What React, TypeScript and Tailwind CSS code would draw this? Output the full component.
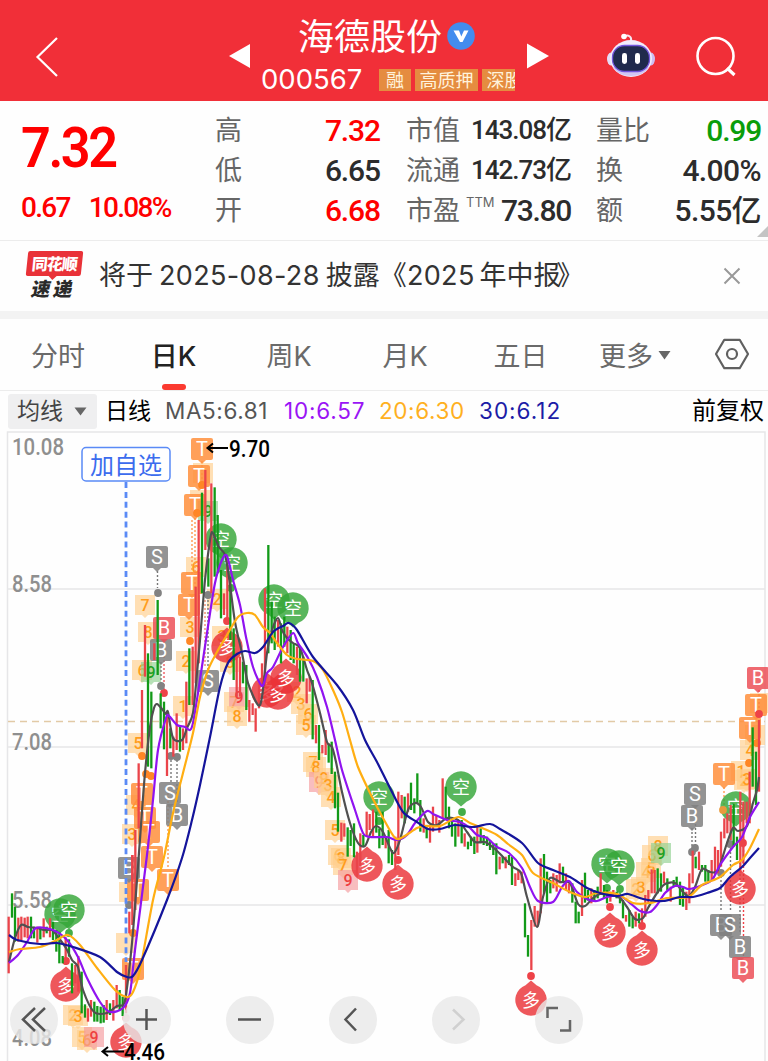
import React from 'react';

const RED = '#ea444a';
const GREEN = '#129a18';

// Each group has its own origin, values are in thirds of a pixel: x, colour, top-bottom
const barGroups = [
  {
    x: 0,
    y: 850,
    bars: '26r200-370 36g130-203 45g170-275 55r203-275 64r200-270 74r203-262 83r200-265 93g200-265 102g230-265 112r230-278 121g232-268 131r205-262 140g230-250 150r205-262 159g215-270 169g240-305 178g245-340 188g318-340 197r262-345 207g268-320 216g340-430 226r345-400 235r318-425 245g365-490 255g463-503 264r475-515 273r450-500 283g455-515 292g468-515 302g470-520 311g465-518 320r450-510 330g460-495 340r450-512 350r405-475 359g420-480 368g440-498 378r345-490 388r185-250 397r15-225',
  },
  {
    x: 0,
    y: 640,
    bars: '397r645-720 406r570-810 416r370-565 426r150-325 435r-45-110 444g40-380 454g155-385 463r10-60 473g-120-105 482g160-265 492g185-328 501r230-408 511g265-325 520r290-350 530r220-330 540g260-335 549r265-330 559r125-310 568g25-195 578r20-195',
  },
  {
    x: 120,
    y: 430,
    bars: '227r470-760 236r270-700 246g188-490 256r120-360 265g385-470 274r160-490 284g172-440 293g255-430 303g420-565 312r490-555 322r390-570 331g440-630 435r475-770 445g345-670 455g515-640 464g560-660 474r570-650 483g580-700 493g560-650 502r590-670 512g600-690',
  },
  {
    x: 120,
    y: 620,
    bars: '341g25-180 350r110-230 360r110-230 369g125-190 379g135-270 388r240-305 398r250-285 407r265-335 417r190-265 426r130-200 521g70-130 531r80-165 540g80-185 550g110-185 560r175-250 569r170-215 578g180-358 588r315-370 597g315-420 607r375-400',
  },
  {
    x: 300,
    y: 740,
    bars: '77r-30-45 86g10-68 95g5-102 105g95-205 114g158-275 124r248-305 133r250-290 143g262-350 152g270-318 162g250-352 171r335-410 181r280-380 190g285-320 200r215-290 209r222-270 219r208-290 229g215-278 238g265-325 248g215-315 257r290-325 266g270-370 276g330-375 286r290-390 295r155-345 305r165-235 314g170-250 324r160-215 333g128-210 343g175-220 352g100-190 361g180-275 371r235-278 380g262-295 390r255-308 399r200-275 409r225-255 418r240-278 428r115-235 437g140-235 447g200-265 456g240-290 466g250-320 475r240-290 485g240-310 494r280-320 504g305-328 513g290-318 523g290-342 532r255-338 542g265-310 551g285-315 561g290-318 570g300-330 580g310-345 589g310-403 599r350-388 608g350-370 617r350-385 627g345-375 636g350-435 646r400-438 655r390-420 665r395-430 675g490-592 684g585-650 694r540-690 704r498-560 713r512-560',
  },
  {
    x: 520,
    y: 740,
    bars: '62r355-520 72g342-460 81g395-488 91g420-460 100r400-445 110r405-455 119r370-430 129g380-425 138r400-450 147r430-460 157g430-488 167g485-550 176g515-550 186r420-528 195g398-488 204g450-482 214r445-490 223g450-480 233g440-475 242r400-465 252g435-475 261g450-490 271r455-485 280r450-470 290g455-475 300g460-490 309g480-535 318r525-545 328g510-560 338g530-565 347r515-560 357g520-550 366r505-550 376r465-530 385r450-490 395r388-460 404r390-460 413g385-460 423g400-455 432r395-430 442g415-450 452r440-485 461g420-440 470g410-440 480g425-495 489g440-500 499r455-510 508r400-490 518r332-430 527g350-385 537r335-390 546g375-395 556g375-425 565g390-425 575r360-420 585r320-405 594r330-400 603r275-380 613r235-295 622r220-280 632r195-300 641g190-320 651g290-360 661r155-400 670r185-370 680r185-250 689r95-250 698g-38-140 708g35-195 717r-60-155',
  },
];

const bars = barGroups.flatMap((g) =>
  g.bars.split(' ').map((s) => {
    const m = s.match(/^(\d+)([rg])(-?\d+)-(\d+)$/)!;
    return { x: g.x + +m[1] / 3, up: m[2] === 'r', y1: g.y + +m[3] / 3, y2: g.y + +m[4] / 3 };
  })
);

const averages = [
  {
    color: '#505050',
    points: '9,962 15,938 21,925 28,927 37,928 44,930 52,930 58,937 66,948 72,960 78,967 83,990 94,1012 107,1013 117,1006 123,1005 126,995 132,943 137,880 141,825 145,773 150,727 154,708 157,704 162,709 166,714 168,712 173,738 182,740 187,728 193,713 197,673 200,640 205,580 210,540 212,532 215,538 219,547 225,555 229,577 235,622 242,653 248,683 258,705 262,697 267,653 272,630 278,618 282,630 287,638 293,643 300,648 307,670 312,683 320,713 327,742 332,747 336,762 342,792 350,823 358,843 365,846 371,832 376,826 383,832 390,848 394,853 400,840 408,810 415,803 421,807 428,822 437,825 447,818 458,820 467,832 475,842 485,842 495,849 503,857 513,867 521,873 527,897 537,927 543,897 550,878 560,882 570,883 578,904 585,906 592,899 600,894 610,895 620,898 627,907 635,919 643,918 648,908 657,893 665,884 675,883 683,892 689,896 695,887 702,869 710,872 718,870 727,843 733,828 738,831 747,826 753,803 757,790 759,777',
  },
  {
    color: '#9013f0',
    points: '9,963 18,955 27,942 36,928 53,930 67,940 78,957 87,978 100,1002 110,1012 123,1008 130,993 135,950 147,855 153,800 158,750 166,718 169,716 177,725 185,727 190,730 193,723 198,693 207,633 215,583 222,560 227,556 233,580 240,605 246,637 253,667 262,686 267,673 273,667 283,647 293,633 298,643 308,658 317,677 327,707 335,740 342,770 355,810 363,833 370,837 387,837 397,840 407,835 415,823 427,811 433,814 447,820 460,822 470,828 477,835 487,838 497,847 509,853 522,868 530,887 538,901 553,902 562,887 569,881 577,892 587,899 597,901 607,897 620,896 630,903 640,911 650,912 657,905 665,893 675,886 683,887 689,889 700,886 712,880 720,865 733,847 742,837 750,817 759,802',
  },
  {
    color: '#ffae12',
    points: '9,952 20,949 40,947 55,941 68,935 80,945 97,968 115,990 127,997 133,992 140,970 153,900 164,857 173,813 183,773 193,733 200,697 208,670 217,652 227,635 238,617 247,613 255,615 263,627 270,633 277,643 287,655 297,659 313,661 323,670 333,690 342,712 350,740 358,767 372,797 383,818 395,838 403,837 417,828 425,826 440,826 458,817 470,823 482,828 497,835 508,844 522,855 533,873 553,883 570,892 585,897 597,893 617,894 633,903 650,903 667,898 688,897 702,885 720,877 733,865 742,860 750,848 759,829',
  },
  {
    color: '#14149b',
    points: '9,935 17,940 40,944 57,943 73,947 100,957 117,972 127,977 133,976 142,960 167,900 182,858 192,820 200,785 210,737 220,687 228,663 237,654 245,651 255,653 263,647 273,632 283,626 289,623 297,630 313,657 337,685 353,710 365,740 377,762 390,788 403,812 417,822 428,829 440,829 455,825 473,827 490,824 500,829 522,843 538,863 553,870 570,877 587,888 600,893 617,896 628,894 643,899 663,901 680,897 693,897 707,893 720,888 730,877 742,867 750,858 759,848',
  },
];

const smoothPath = (points: string) => {
  const p = points.split(' ').map((s) => s.split(',').map(Number));
  let d = `M${p[0][0]} ${p[0][1]}`;
  for (let i = 0; i < p.length - 1; i++) {
    const a = p[i - 1] || p[i];
    const b = p[i];
    const c = p[i + 1];
    const e = p[i + 2] || c;
    d += `C${b[0] + (c[0] - a[0]) / 7} ${b[1] + (c[1] - a[1]) / 7} ${c[0] - (e[0] - b[0]) / 7} ${c[1] - (e[1] - b[1]) / 7} ${c[0]} ${c[1]}`;
  }
  return d;
};

type Mark = [string, number, number];

// Nine-count labels
const counts: Mark[] = [
  ['7', 145, 605], ['8', 148, 632], ['6', 142, 670], ['g9', 151, 672], ['5', 138, 743], ['4', 136, 805], ['3', 132, 834],
  ['2', 186, 661], ['1', 183, 706], ['6', 196, 567], ['3', 190, 627], ['', 200, 500], ['', 203, 473], ['g9', 208, 511], ['2', 217, 599],
  ['3', 222, 636], ['8', 230, 662], ['7', 234, 702], ['r9', 239, 697], ['8', 237, 716], ['', 129, 892], ['', 126, 943],
  ['2', 297, 692], ['3', 301, 704], ['6', 308, 714], ['5', 306, 725], ['7', 313, 762], ['8', 316, 767], ['r9', 319, 782],
  ['9', 324, 778], ['3', 328, 785], ['4', 331, 797], ['5', 335, 830], ['6', 338, 855], ['8', 341, 858], ['7', 343, 865], ['r9', 348, 880],
  ['2', 73, 1015], ['3', 78, 1016], ['5', 82, 1037], ['6', 87, 1040], ['r9', 94, 1037],
  ['2', 636, 889], ['3', 641, 887], ['4', 646, 872], ['5', 651, 868], ['6', 652, 855], ['8', 658, 846], ['g9', 661, 853],
  ['1', 741, 771], ['2', 744, 780], ['3', 747, 779], ['4', 750, 750], ['', 755, 735], ['', 760, 703],
];

const badges: Mark[] = [
  ['T', 133, 969], ['T', 138, 890], ['T', 142, 794], ['T', 145, 818], ['T', 149, 832], ['T', 152, 857], ['T', 168, 880],
  ['T', 189, 605], ['T', 192, 583], ['T', 195, 505], ['T', 199, 476], ['T', 202, 449],
  ['T', 724, 774], ['T', 750, 728], ['T', 756, 705],
  ['S', 157, 557], ['b', 161, 650], ['B', 164, 628], ['S', 170, 793], ['b', 177, 815], ['b', 129, 868], ['S', 208, 681],
  ['b', 692, 816], ['S', 695, 794], ['b', 721, 925], ['S', 730, 925], ['b', 740, 947], ['B', 743, 968], ['B', 758, 678],
];

const bubbles: Mark[] = [
  ['空', 60, 914], ['空', 69, 910], ['空', 221, 539], ['空', 232, 563], ['空', 274, 600], ['空', 293, 608], ['空', 379, 797],
  ['空', 461, 787], ['空', 607, 864], ['空', 619, 866], ['空', 736, 807],
  ['多', 66, 986], ['多', 126, 1042], ['多', 227, 647], ['多', 267, 692], ['多', 278, 694], ['多', 286, 678], ['多', 367, 866],
  ['多', 398, 884], ['多', 531, 1000], ['多', 610, 932], ['多', 642, 950], ['多', 740, 889],
];

const dots: Mark[] = [
  ['#44ad48', 69, 933], ['#44ad48', 462, 812], ['#44ad48', 379, 821], ['#44ad48', 607, 888], ['#44ad48', 620, 889], ['#44ad48', 231, 588],
  ['#ee4248', 66, 961], ['#f7c4c8', 126, 1018], ['#ee4248', 398, 860], ['#ee4248', 531, 976], ['#ee4248', 610, 907],
  ['#ee4248', 642, 926], ['#ee4248', 743, 843], ['#ee4248', 164, 693], ['#ee4248', 227, 621], ['#ee4248', 759, 714],
  ['#828282', 158, 593], ['#828282', 161, 686], ['#828282', 171, 756], ['#828282', 177, 757], ['#828282', 208, 595],
  ['#828282', 695, 848], ['#828282', 692, 852], ['#828282', 721, 873], ['#828282', 730, 844], ['#828282', 129, 905],
  ['#ff8625', 142, 756], ['#ff8625', 146, 774], ['#ff8625', 151, 776], ['#ff8625', 190, 641], ['#ff8625', 202, 485], ['#ff8625', 197, 513],
  ['#ff8625', 749, 763], ['#e89a3c', 723, 810], ['#ff8625', 133, 933], ['#ff8625', 757, 743],
];

const leaders: [string, number, number, number][] = [
  ['#777', 157.5, 571, 588], ['#777', 161, 662, 684], ['#ee5a5e', 164, 640, 692], ['#777', 171, 760, 782], ['#777', 177, 760, 804],
  ['#ff9a50', 168, 785, 868], ['#ff9a50', 195, 518, 590], ['#ff9a50', 192, 520, 590], ['#777', 208, 600, 670], ['#ee8a70', 205, 600, 668],
  ['#777', 692, 828, 850], ['#777', 695.5, 808, 846], ['#777', 721, 876, 912], ['#777', 730.5, 848, 912], ['#777', 740, 862, 934],
  ['#ee4248', 743.5, 846, 956], ['#ff9a50', 724, 787, 808], ['#ff9a50', 202, 461, 482], ['#ee4248', 759, 690, 710],
];

const numFont = 'Roboto, "Noto Sans CJK SC", sans-serif';
const cjkFont = '"Noto Sans CJK SC", sans-serif';

const Count = ({ mark: [label, x, y] }: { mark: Mark }) => {
  const kind = label[0];
  const box = kind === 'g' ? '#8fd08f' : kind === 'r' ? '#f59a9c' : '#ffce8c';
  const ink = kind === 'g' ? '#22a022' : kind === 'r' ? '#ee4040' : '#ff9d1c';
  return (
    <g>
      <path d={`M${x - 10} ${y - 10}h20v20h-7l-3 3l-3-3h-7z`} fill={box} fillOpacity={0.65} />
      {label && (
        <text x={x} y={y + 6} fontSize={16} fontFamily={numFont} fontWeight={500} textAnchor="middle" fill={ink}>
          {label.replace(/[gr]/, '')}
        </text>
      )}
    </g>
  );
};

const Badge = ({ mark: [label, x, y] }: { mark: Mark }) => {
  const fill = label === 'T' ? '#ff8f3c' : label === 'B' ? '#ec5058' : '#808080';
  return (
    <g>
      <rect x={x - 11} y={y - 11} width={22} height={22} rx={2} fill={fill} fillOpacity={0.85} />
      <path d={`M${x - 4} ${y + 11}h8l-4 4z`} fill={fill} fillOpacity={0.85} />
      <text x={x} y={y + 7} fontSize={20} fontFamily={numFont} textAnchor="middle" fill="#fff">
        {label.toUpperCase()}
      </text>
    </g>
  );
};

const Bubble = ({ mark: [label, x, y] }: { mark: Mark }) => {
  const down = label === '空';
  const s = down ? 1 : -1;
  return (
    <g>
      <path
        d={`M${x - 5.5} ${y + 14.7 * s}L${x} ${y + 19.5 * s}L${x + 5.5} ${y + 14.7 * s}A15.7 15.7 0 1 ${down ? 0 : 1} ${x - 5.5} ${y + 14.7 * s}z`}
        fill={down ? '#35a638' : '#ea3237'}
        fillOpacity={0.82}
      />
      <text x={x} y={y + 6.5} fontSize={18} fontFamily={cjkFont} textAnchor="middle" fill="#fff">
        {label}
      </text>
    </g>
  );
};

const Dot = ({ mark: [fill, x, y] }: { mark: Mark }) => <circle cx={x} cy={y} r={3.9} fill={fill} />;

const axis: [string, number, number][] = [
  ['10.08', 455, 52],
  ['8.58', 592, 40],
  ['7.08', 750, 40],
  ['5.58', 908, 40],
  ['4.08', 1046, 40],
];

const Chart = () => (
  <svg viewBox="0 431 768 630" width="768" height="630" className="block">
    <g stroke="#e6e6e8" strokeWidth={1.5}>
      <path d="M7.5 1061V432H765V1061" fill="none" />
      <path d="M8 589H765M8 747H765M8 905H765" />
    </g>
    {axis.map(([t, y, w]) => (
      <text key={t} x={12} y={y} fontSize={23} fontFamily={numFont} fontWeight={500} fill="#8f8f8f" textLength={w} lengthAdjust="spacingAndGlyphs">
        {t}
      </text>
    ))}
    <path d="M8 721.5H765" stroke="#e2caa6" strokeWidth={1.6} strokeDasharray="7 5" />
    {counts.map((m, i) => <Count key={i} mark={m} />)}
    {leaders.map(([c, x, y1, y2], i) => (
      <path key={i} d={`M${x} ${y1}V${y2}`} stroke={c} strokeWidth={1.4} strokeDasharray="2 2" />
    ))}
    {badges.map((m, i) => <Badge key={i} mark={m} />)}
    {bubbles.map((m, i) => <Bubble key={i} mark={m} />)}
    {dots.map((m, i) => <Dot key={i} mark={m} />)}
    <path d="M126 482V962" stroke="#5a8af6" strokeWidth={2.8} strokeDasharray="6 3.9" />
    {bars.map((b, i) => (
      <path key={i} d={`M${b.x} ${b.y1}V${b.y2}`} stroke={b.up ? RED : GREEN} strokeWidth={2.3} />
    ))}
    {averages.map((a) => (
      <path key={a.color} d={smoothPath(a.points)} fill="none" stroke={a.color} strokeWidth={2.2} strokeLinejoin="round" />
    ))}
    <rect x={82} y={447.5} width={88} height={33.5} rx={4} fill="#fff" stroke="#5a8af6" strokeWidth={1.5} />
    <text x={126} y={473.5} fontSize={24} fontFamily={cjkFont} textAnchor="middle" fill="#3c6cee">
      加自选
    </text>
    <g fill="none" stroke="#000" strokeWidth={2}>
      <path d="M228 448H208M213 443.5L207.5 448L213 452.5" />
      <path d="M124 1051.5H103M108 1047L102.5 1051.5L108 1056" />
    </g>
    <g fontSize={23} fontFamily={numFont} fontWeight={500} fill="#000">
      <text x={229} y={456.5} textLength={41} lengthAdjust="spacingAndGlyphs">9.70</text>
      <text x={124} y={1059.5} textLength={41} lengthAdjust="spacingAndGlyphs">4.46</text>
    </g>
  </svg>
);

const controls = [
  { name: 'first', icon: 'M25 12L13 23.5L25 35M35 12L23 23.5L35 35', stroke: '#555' },
  { name: 'zoom in', icon: 'M23.5 13V34M13 23.5H34', stroke: '#555' },
  { name: 'zoom out', icon: 'M12 23.5H35', stroke: '#555' },
  { name: 'previous', icon: 'M27 12.5L16.5 23.5L27 34.5', stroke: '#555' },
  { name: 'next', icon: 'M21 13.5L31.5 23.5L21 33.5', stroke: '#d0d0d0' },
  { name: 'full screen', icon: 'M12.5 22V12H23M35 24V34.5H25', stroke: '#666' },
];

const Controls = () => (
  <div className="absolute bottom-[17px] left-[10px] flex">
    {controls.map((c, i) => (
      <button
        key={c.name}
        aria-label={c.name}
        className={`h-[48px] w-[48px] shrink-0 rounded-full bg-[#e8e8e8]/80 ${i === 0 ? 'mr-[65px]' : 'mr-[55px]'}`}
      >
        <svg viewBox="0 0 48 48" className="h-full w-full" fill="none" stroke={c.stroke} strokeWidth={2.5} aria-hidden="true">
          <path d={c.icon} />
        </svg>
      </button>
    ))}
  </div>
);

const Robot = () => (
  <svg viewBox="0 0 48 46" width="48" height="46">
    <path d="M24 8C25 3 21 2 18 3" fill="none" stroke="#f6e6f0" strokeWidth="2" />
    <circle cx="17" cy="3.5" r="2.8" fill="#fff" />
    <ellipse cx="4" cy="26" rx="4" ry="6.5" fill="#e5dcf6" />
    <ellipse cx="44" cy="26" rx="4" ry="6.5" fill="#cdbdf2" />
    <ellipse cx="24" cy="25.5" rx="21" ry="18.5" fill="#f1ecfb" />
    <path d="M6 34C12 46 36 46 42 34Z" fill="#d3c6f4" />
    <rect x="5.5" y="12.5" width="37" height="26" rx="12" fill="#202a4c" stroke="#7356dc" strokeWidth="1.3" />
    <rect x="15" y="20" width="5" height="11" rx="2.4" fill="#fff" />
    <rect x="28" y="20" width="5" height="11" rx="2.4" fill="#fff" />
  </svg>
);

const Header = () => (
  <header className="flex h-[101px] bg-[#f12f38] text-white">
    <svg width="24" height="42" viewBox="0 0 24 42" className="mt-[36px] ml-[35px]" fill="none" stroke="#fff" strokeWidth="2.2">
      <path d="M22 2L2.5 21L22 40" />
    </svg>
    <svg width="23" height="26" className="mt-[43px] ml-[168px]" fill="#fff">
      <path d="M2 13L24 0.5V25.5Z" />
    </svg>
    <div className="ml-[11px] w-[254px]">
      <div className="mt-[11px] flex h-[49px] items-center pl-[37px]">
        <span className="mt-[-3px] text-[36px] leading-[48px] whitespace-nowrap">海德股份</span>
        <svg width="28" height="28" viewBox="0 0 28 28" className="ml-[5px] shrink-0">
          <circle cx="14" cy="14" r="13.8" fill="#438cee" />
          <path d="M6.5 8.5H12L14.3 14.5L17 8.5H21.5L15.5 20H13Z" fill="#fff" />
        </svg>
      </div>
      <div className="flex h-[40px] items-center">
        <span className="w-[118px] shrink-0 font-['Inter'] text-[27.5px]">000567</span>
        <div className="flex h-[22px] w-[136px] gap-[4px] overflow-hidden text-[18px] leading-[20px] whitespace-nowrap text-[#fff3dc]">
          <span className="shrink-0 bg-[#e58c40] px-[7px]">融</span>
          <span className="shrink-0 bg-[#e58c40] px-[4.5px]">高质押</span>
          <span className="shrink-0 bg-[#e58c40] px-[4.5px]">深股</span>
        </div>
      </div>
    </div>
    <svg width="24" height="26" className="mt-[43px] ml-[11px]" fill="#fff">
      <path d="M1 0.5V25.5L23 13Z" />
    </svg>
    <div className="mt-[33px] ml-[57px]">
      <Robot />
    </div>
    <svg width="42" height="42" viewBox="0 0 42 42" className="mt-[36px] ml-[40px]" fill="none" stroke="#fff" strokeWidth="2.6">
      <circle cx="20.5" cy="20" r="18" />
      <path d="M32 32L39.5 39" strokeWidth="3.2" />
    </svg>
  </header>
);

interface CellProps {
  label: React.ReactNode;
  value: string;
  className: string;
}

const Cell = ({ label, value, className }: CellProps) => (
  <div className="flex h-[40px] items-center justify-between whitespace-nowrap">
    <span className="mt-[-3px] text-[27px] text-[#666]">{label}</span>
    <span className={`mt-[-2px] font-['Roboto','Noto_Sans_CJK_SC',sans-serif] font-medium ${className}`}>{value}</span>
  </div>
);

const Quote = () => (
  <section className="relative flex h-[140px] border-b border-[#ececec] pt-[10px]">
    <div className="ml-[21px] w-[194px] font-['Roboto'] text-[#ff0000]">
      <div className="mt-[4px] h-[66px] w-[110px] origin-left scale-x-[0.95] text-[55px] leading-[66px] font-semibold tracking-[-2.6px]">7.32</div>
      <div className="mt-[10px] flex gap-[19px] text-[28px] leading-[34px] font-medium tracking-[-1.7px]">
        <span>0.67</span>
        <span>10.08%</span>
      </div>
    </div>
    <div className="w-[165px]">
      <Cell label="高" value="7.32" className="text-[30px] tracking-[-1.1px] text-[#ff0000]" />
      <Cell label="低" value="6.65" className="text-[30px] tracking-[-1.1px] text-[#2c2c2c]" />
      <Cell label="开" value="6.68" className="text-[30px] tracking-[-1.1px] text-[#ff0000]" />
    </div>
    <div className="ml-[26px] w-[165px]">
      <Cell label="市值" value="143.08亿" className="text-[26px] tracking-[-1px] text-[#2c2c2c]" />
      <Cell label="流通" value="142.73亿" className="text-[26px] tracking-[-1px] text-[#2c2c2c]" />
      <Cell
        label={<>市盈<sup className="top-[-13px] ml-[6px] font-['Inter'] text-[13px]">TTM</sup></>}
        value="73.80"
        className="text-[30px] tracking-[-1.3px] text-[#2c2c2c]"
      />
    </div>
    <div className="ml-[25px] w-[165px]">
      <Cell label="量比" value="0.99" className="text-[30px] tracking-[-1.2px] text-[#0a9d0a]" />
      <Cell label="换" value="4.00%" className="text-[30px] tracking-[-0.6px] text-[#2c2c2c]" />
      <Cell label="额" value="5.55亿" className="text-[30px] tracking-[-0.6px] text-[#2c2c2c]" />
    </div>
    <svg width="11" height="11" className="absolute right-0 bottom-[3px]" fill="#c4c4c4">
      <path d="M11 0V11H0Z" />
    </svg>
  </section>
);

const News = () => (
  <section className="flex h-[70px] items-center">
    <div className="ml-[25px] flex w-[58px] flex-col items-center">
      <div className="relative mt-[-1px] h-[25px] w-[55px] -skew-x-6 rounded-[2px] bg-[#e93238] text-center text-[16px] leading-[24px] font-black tracking-[-1px] whitespace-nowrap text-white">
        同花顺
        <svg width="10" height="5" className="absolute top-[24px] left-[22px]" fill="#e93238">
          <path d="M0 0H10L5 5Z" />
        </svg>
      </div>
      <div className="mt-[2px] mb-[2px] -skew-x-12 text-[19px] leading-[20px] font-black tracking-[3px] text-[#2a2a2a]">速递</div>
    </div>
    <p className="ml-[16px] font-['Inter','Noto_Sans_CJK_SC',sans-serif] text-[27px] whitespace-nowrap text-[#333]">
      将于<span className="mx-[6px] tracking-[0.35px]">2025-08-28</span>披露
      <span className="tracking-[0.3px]">《2025</span>
      <span className="ml-[5px]">年中报</span>
      <span className="ml-[-4px]">》</span>
    </p>
    <svg width="18" height="18" className="mr-[27px] ml-auto" fill="none" stroke="#999" strokeWidth="2">
      <path d="M1.5 1.5L16.5 16.5M16.5 1.5L1.5 16.5" />
    </svg>
  </section>
);

const tabs = [
  { label: '分时', width: 'w-[116px]' },
  { label: '日K', width: 'w-[115px]', active: true },
  { label: '周K', width: 'w-[116px]' },
  { label: '月K', width: 'w-[116px]' },
  { label: '五日', width: 'w-[115px]' },
];

const Tabs = () => (
  <nav className="flex h-[72px] items-start border-b border-[#ececec] pt-[16px] text-[27px] leading-[40px] whitespace-nowrap text-[#6a6a6a]">
    {tabs.map((t) => (
      <div key={t.label} className={`relative text-center ${t.width} ${t.active ? 'font-medium text-[#222]' : ''}`}>
        {t.label.replace('K', '')}
        {t.label.includes('K') && <span className="font-['Inter']">K</span>}
        {t.active && <i className="absolute top-[49px] left-[46px] h-[6px] w-[24px] rounded-full bg-[#fb3a30]" />}
      </div>
    ))}
    <div className="ml-[21px] flex items-center">
      更多
      <svg width="13" height="10" className="ml-[5px]" fill="#666">
        <path d="M0.5 1H12.5L6.5 9.5Z" />
      </svg>
    </div>
    <svg width="36" height="32" viewBox="0 0 36 32" className="mt-[3px] mr-[18px] ml-auto" fill="none" stroke="#606060" strokeWidth="2.2">
      <path d="M10.3 1.8H25.7L34 16L25.7 30.2H10.3L2 16Z" strokeLinejoin="round" />
      <circle cx="18" cy="16" r="5" />
    </svg>
  </nav>
);

const Averages = () => (
  <div className="flex h-[40px] items-center pl-[8px] font-['Inter','Noto_Sans_CJK_SC',sans-serif] text-[22.5px] whitespace-nowrap">
    <div className="flex h-[35px] w-[89px] items-center rounded-[3px] bg-[#efeff0] pl-[9px] text-[23px] text-[#444]">
      均线
      <svg width="13" height="9" className="ml-[11px]" fill="#666">
        <path d="M0.5 0.5H12.5L6.5 8.5Z" />
      </svg>
    </div>
    <span className="ml-[8px] w-[60px] text-[23px] text-black">日线</span>
    <span className="w-[119px] tracking-[0.6px] text-[#555]">MA5:6.81</span>
    <span className="w-[95px] tracking-[0.8px] text-[#9a14f5]">10:6.57</span>
    <span className="w-[100px] tracking-[0.6px] text-[#ffb01f]">20:6.30</span>
    <span className="tracking-[1px] text-[#1c1ca6]">30:6.12</span>
    <span className="mr-[4px] ml-auto text-[24px] text-black">前复权</span>
  </div>
);

const App = () => (
  <div className="h-[1061px] w-[768px] overflow-hidden bg-[#fefefe] font-['Noto_Sans_CJK_SC',sans-serif]">
    <Header />
    <Quote />
    <News />
    <div className="h-[8px] bg-[#f3f3f3]" />
    <Tabs />
    <Averages />
    <main className="relative">
      <Chart />
      <Controls />
    </main>
  </div>
);

export default App;
